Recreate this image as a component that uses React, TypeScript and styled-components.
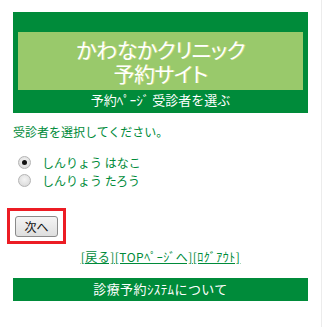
import React, { useState } from "react";
import styled, { createGlobalStyle } from "styled-components";

const Global = createGlobalStyle`
  html, body { margin: 0; padding: 0; background: #fff; }
  body {
    font-family: "Noto Sans CJK JP", "Noto Sans", sans-serif;
    font-size: 12px;
    color: #008b3a;
  }
  * { box-sizing: border-box; }
`;

const Page = styled.div`
  width: 322px;
  min-height: 327px;
  border-right: 1px solid #ececec;
  padding: 12px 0 0 13px;
`;

const Wrap = styled.div`
  width: 295px;
`;

const Header = styled.header`
  background: #008b3a;
  padding: 20px 5px 0;
`;

const TitleBox = styled.h1`
  margin: 0;
  background: #99c96b;
  color: #fff;
  font-weight: normal;
  font-size: 21px;
  line-height: 24px;
  padding: 5px 0;
  text-align: center;
  letter-spacing: -0.5px;
  font-feature-settings: "palt";
  text-shadow: 1px 0 0 rgba(255, 240, 150, 0.5);
`;

const Subtitle = styled.div`
  height: 23px;
  line-height: 20px;
  color: #fff;
  text-align: center;
  font-size: 13px;
`;

const Lead = styled.p`
  margin: 10px 0 0;
  line-height: 18px;
  font-size: 12px;
`;

const Choices = styled.div`
  margin-top: 12px;
  display: flex;
  flex-direction: column;
`;

const Choice = styled.label`
  display: flex;
  align-items: center;
  height: 18px;
  padding-left: 5px;
  gap: 11px;
  font-size: 12px;
  cursor: pointer;
`;

const Radio = styled.input`
  appearance: none;
  margin: 0;
  width: 13px;
  height: 13px;
  border-radius: 50%;
  border: 1px solid #b4b4b4;
  background: radial-gradient(circle at 50% 40%, #f4f4f4 0%, #e2e2e2 60%, #d0d0d0 100%);
  display: grid;
  place-items: center;
  &:checked::after {
    content: "";
    width: 5px;
    height: 5px;
    border-radius: 50%;
    background: #111;
  }
`;

const Highlight = styled.div`
  margin-top: 19px;
  margin-left: -6px;
  width: 59px;
  border: 3px solid #ec1c24;
  padding: 5px 5px 4px;
`;

const Button = styled.button`
  width: 43px;
  height: 21px;
  padding: 0;
  border: 1px solid #8a8a8a;
  border-radius: 3px;
  background: linear-gradient(#f4f4f4, #dedede);
  font-family: "Noto Sans CJK JP", sans-serif;
  font-size: 12px;
  line-height: 19px;
  color: #111;
`;

const Links = styled.nav`
  margin-top: 4px;
  text-align: center;
  line-height: 18px;
  font-size: 12px;
  letter-spacing: 0.5px;
`;

const Link = styled.a`
  color: #008b3a;
  text-decoration: underline;
`;

const Footer = styled.footer`
  margin-top: 12px;
  background: #008b3a;
  color: #fff;
  height: 23px;
  line-height: 22px;
  text-align: center;
  font-size: 13px;
  letter-spacing: 0.4px;
`;

export default function App() {
  const [sel, setSel] = useState("hanako");
  return (
    <>
      <Global />
      <Page>
        <Wrap>
          <Header>
            <TitleBox>
              かわなかクリニック
              <br />
              予約サイト
            </TitleBox>
            <Subtitle>予約ﾍﾟｰｼﾞ 受診者を選ぶ</Subtitle>
          </Header>
          <Lead>受診者を選択してください。</Lead>
          <Choices>
            <Choice>
              <Radio
                type="radio"
                name="patient"
                checked={sel === "hanako"}
                onChange={() => setSel("hanako")}
              />
              しんりょう はなこ
            </Choice>
            <Choice>
              <Radio
                type="radio"
                name="patient"
                checked={sel === "taro"}
                onChange={() => setSel("taro")}
              />
              しんりょう たろう
            </Choice>
          </Choices>
          <Highlight>
            <Button type="button">次へ</Button>
          </Highlight>
          <Links>
            <Link href="#">[戻る]</Link>
            <Link href="#">[TOPﾍﾟｰｼﾞへ]</Link>
            <Link href="#">[ﾛｸﾞｱｳﾄ]</Link>
          </Links>
          <Footer>診療予約ｼｽﾃﾑについて</Footer>
        </Wrap>
      </Page>
    </>
  );
}
